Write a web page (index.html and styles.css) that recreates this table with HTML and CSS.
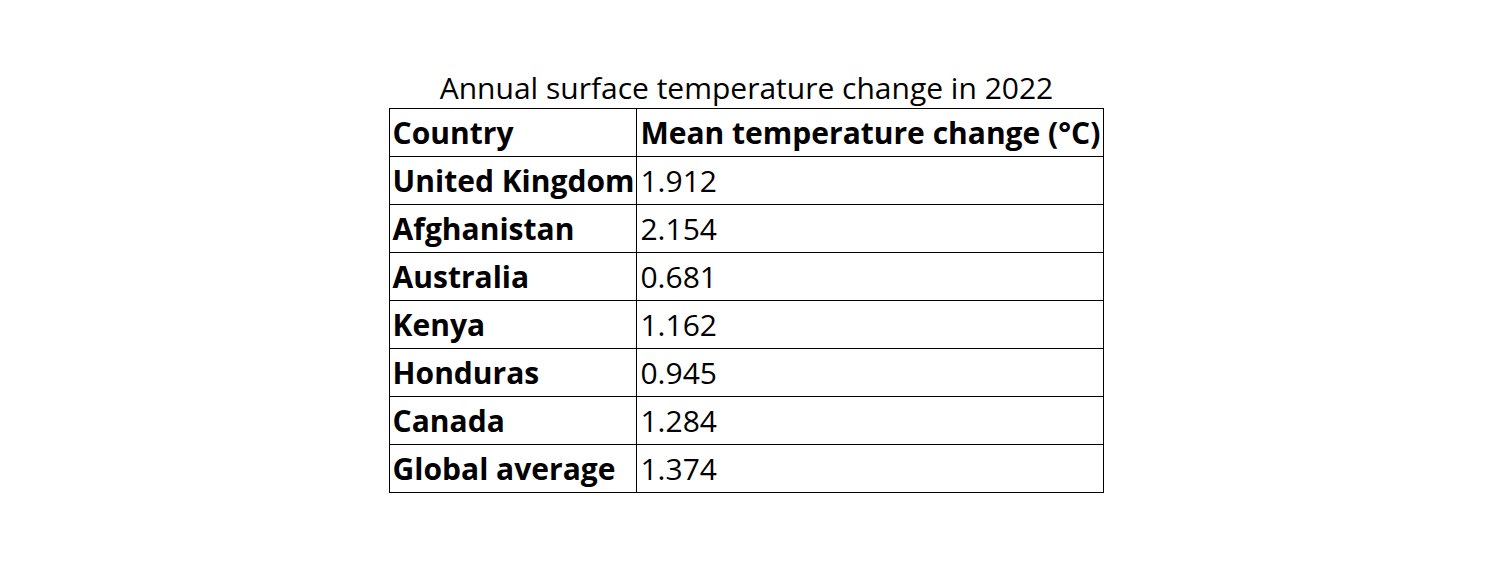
FILE: index.html
```html
<!DOCTYPE html>
<html>
<head>
<meta charset="utf-8">
<link rel="stylesheet" href="styles.css">
</head>
<body>
<main class="page">
<table class="data">
<caption>Annual surface temperature change in 2022</caption>
<thead>
<tr><th>Country</th><th class="val">Mean temperature change (°C)</th></tr>
</thead>
<tbody>
<tr><th>United Kingdom</th><td class="val">1.912</td></tr>
<tr><th>Afghanistan</th><td class="val">2.154</td></tr>
<tr><th>Australia</th><td class="val">0.681</td></tr>
<tr><th>Kenya</th><td class="val">1.162</td></tr>
<tr><th>Honduras</th><td class="val">0.945</td></tr>
<tr><th>Canada</th><td class="val">1.284</td></tr>
<tr><th>Global average</th><td class="val">1.374</td></tr>
</tbody>
</table>
</main>
</body>
</html>
```
FILE: styles.css
```css
html, body {
  margin: 0;
  background: #fff;
}
.page {
  display: flex;
  justify-content: center;
  padding-top: 69px;
  padding-right: 7px;
  font-family: "Open Sans", sans-serif;
  color: #000;
}
.data {
  border-collapse: collapse;
  font-size: 30px;
}
.data caption {
  font-weight: normal;
  line-height: 38px;
  padding-bottom: 1px;
}
.data th, .data td {
  border: 1px solid #000;
  padding: 4px 2px 3px 3px;
  text-align: left;
  line-height: 40px;
}
.data .val {
  padding-right: 3px;
}
.data th {
  font-weight: bold;
}
.data td {
  font-weight: normal;
}
```
